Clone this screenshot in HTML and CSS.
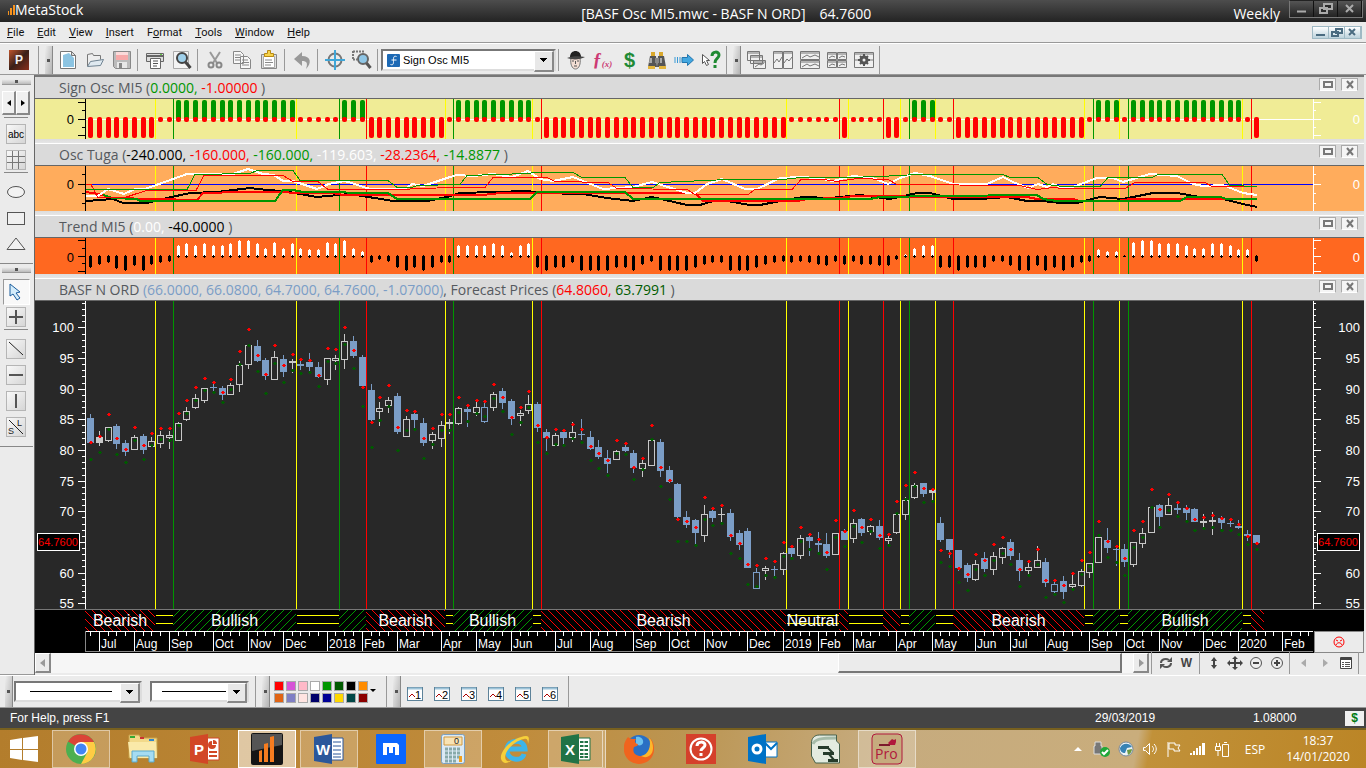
FILE: index.html
```html
<!DOCTYPE html>
<html lang="en">
<head>
  <meta charset="utf-8">
  <title>MetaStock</title>
  <link rel="stylesheet" href="styles.css">
</head>
<body>
  <header class="titlebar">
    <div class="brand">
      <svg width="7" height="10" viewBox="0 0 7 10"><path d="M0 6h1v4H0zM2 3h2v7H2zM5 0h2v10H5z" fill="#f7931e"/></svg>
      <span>MetaStock</span>
    </div>
    <div class="doc-title"><span>[BASF Osc MI5.mwc - BASF N ORD]</span><span>64.7600</span></div>
    <div class="period">Weekly</div>
    <div class="win-buttons">
      <button aria-label="Minimize"><svg width="14" height="14"><path d="M2 9.500h9" stroke="#aaa" stroke-width="2"/></svg></button>
      <button aria-label="Restore"><svg width="16" height="14"><path d="M6 2h8v5H6zM2 6h7v5H2z" fill="#2a2a2a" stroke="#aaa" stroke-width="2"/></svg></button>
      <button aria-label="Close"><svg width="12" height="14"><path d="M2 3l7 7M9 3l-7 7" stroke="#aaa" stroke-width="2"/></svg></button>
    </div>
  </header>

  <nav class="menubar">
    <a href="#"><u>F</u>ile</a>
    <a href="#"><u>E</u>dit</a>
    <a href="#"><u>V</u>iew</a>
    <a href="#"><u>I</u>nsert</a>
    <a href="#">F<u>o</u>rmat</a>
    <a href="#"><u>T</u>ools</a>
    <a href="#"><u>W</u>indow</a>
    <a href="#"><u>H</u>elp</a>
    <div class="mdi-buttons">
      <button aria-label="Minimize chart"><svg width="12" height="11"><path d="M1 8h9" stroke="#4a6b80" stroke-width="2"/></svg></button>
      <button aria-label="Restore chart"><svg width="14" height="11"><path d="M6 2h6v4H6zM2 5h6v4H2z" fill="#dbe8ee" stroke="#4a6b80" stroke-width="2"/></svg></button>
      <button aria-label="Close chart"><svg width="11" height="11"><path d="M2 2l6 6M8 2l-6 6" stroke="#4a6b80" stroke-width="2"/></svg></button>
    </div>
  </nav>

  <div class="toolbar">
    <button class="p-icon" aria-label="Power Console">P</button>
    <i class="vsep wide"></i>
    <i class="grip"></i>
    <button class="tool" aria-label="New"><svg width="20" height="20"><path d="M2.500 1.500h11l4 4v13h-15z" fill="#fff" stroke="#777"/><path d="M5 5l6-2 5 5v9H5z" fill="#8cc4e2"/><path d="M13.500 1.500v4h4z" fill="#ddd" stroke="#777"/></svg></button>
    <button class="tool" aria-label="Open"><svg width="20" height="20"><path d="M2.500 16V4.500l5-1 1 2h7v4" fill="#eee" stroke="#777"/><path d="M2.500 16.500l3-5 13-2-3 6z" fill="#dfe9f0" stroke="#6f8392"/></svg></button>
    <button class="tool" aria-label="Save"><svg width="20" height="20"><path d="M1.500 1.500h17v17h-15l-2-2z" fill="#bbb" stroke="#888"/><path d="M4 2h12v8H4z" fill="#f7a9a9"/><path d="M4 2h12v3H4z" fill="#fbdada"/><path d="M5 12h10v6H5z" fill="#e8e8e8"/><path d="M7 13h3v5H7z" fill="#888"/></svg></button>
    <i class="vsep"></i>
    <button class="tool" aria-label="Print"><svg width="20" height="20"><path d="M1.500 3.500h17v8h-17z" fill="#ddd" stroke="#666"/><path d="M2 6h16" stroke="#666" stroke-width="2"/><path d="M5.500 8.500h10v10h-10z" fill="#fff" stroke="#666"/><path d="M8 11h5M8 13.500h5M8 16h4" stroke="#555"/><path d="M15 4h2v1h-2z" fill="#6c4"/></svg></button>
    <button class="tool" aria-label="Print preview"><svg width="20" height="20"><path d="M1.500 1.500h15v17h-15z" fill="#f4f4f4" stroke="#aaa"/><circle cx="10" cy="8" r="5" fill="#9fd0ea" stroke="#444" stroke-width="2"/><path d="M13.500 12l5 6" stroke="#444" stroke-width="3"/></svg></button>
    <i class="vsep"></i>
    <button class="tool" aria-label="Cut"><svg width="20" height="20"><path d="M5 2l7 11M15 2L8 13" stroke="#999" stroke-width="2"/><circle cx="6" cy="15" r="2.500" fill="none" stroke="#888" stroke-width="2"/><circle cx="14" cy="15" r="2.500" fill="none" stroke="#888" stroke-width="2"/></svg></button>
    <button class="tool" aria-label="Copy"><svg width="20" height="20"><path d="M1.500 1.500h7l3 3v9h-10zM8.500 6.500h7l3 3v9h-10z" fill="#f8f8f8" stroke="#888"/><path d="M3 5h6M3 7.500h5M3 10h5M10 10h6M10 12.500h7M10 15h7" stroke="#888"/></svg></button>
    <button class="tool" aria-label="Paste"><svg width="20" height="20"><path d="M2.500 4.500h15v14h-15z" fill="#ddd" stroke="#888"/><path d="M4.500 6.500h11v11h-11z" fill="#fff" stroke="#aaa"/><path d="M5.500 6.500v-3h3v-3h3v3h3v3z" fill="#f6d24a" stroke="#b98a12"/><path d="M6 10h7M6 12.500h8M6 15h6" stroke="#888"/></svg></button>
    <i class="vsep"></i>
    <button class="tool" aria-label="Undo"><svg width="20" height="20"><path d="M2 9l8-7v4c9 0 10 7 4 13 2-6 1-8-4-8v5z" fill="#999"/></svg></button>
    <i class="vsep"></i>
    <button class="tool" aria-label="Crosshair"><svg width="20" height="20"><circle cx="10" cy="10" r="6.500" fill="none" stroke="#777" stroke-width="2"/><path d="M10 0v20M0 10h20" stroke="#3fa6d8" stroke-width="2"/></svg></button>
    <button class="tool" aria-label="Zoom box"><svg width="20" height="20"><path d="M1 1.500h11M1 1v9M1 9.500h4" stroke="#777" stroke-width="2" stroke-dasharray="2 1" fill="none"/><circle cx="11" cy="9" r="5" fill="#8fc6e6" stroke="#666" stroke-width="2"/><path d="M14.500 13l4 5" stroke="#555" stroke-width="3"/></svg></button>
    <i class="vsep"></i>
    <label class="combo indicator">
      <svg width="13" height="13"><rect width="13" height="13" rx="1" fill="#1c69b5"/><path d="M9.500 2.500c-3-1-3 1-3 4s0 5-3 4M4.500 6h5" stroke="#fff" fill="none"/></svg>
      <select aria-label="Indicator"><option>Sign Osc MI5</option></select>
    </label>
    <i class="vsep"></i>
    <button class="tool" aria-label="Expert Advisor"><svg width="20" height="20"><path d="M5 8h9c1 6-1 11-4.500 11S4 14 5 8z" fill="#f3ddd3" stroke="#777"/><path d="M4 7c0-8 11-8 11 0z" fill="#222"/><path d="M1 8c5-2 12-2 18-1-5 3-13 3-18 1z" fill="#444"/><path d="M6 11h2M11 11h2M8 16h3M9.500 11v3" stroke="#555"/></svg></button>
    <button class="tool fx" aria-label="Indicator Builder">ƒ<small>(x)</small></button>
    <button class="tool dollar" aria-label="System Tester">$</button>
    <button class="tool" aria-label="Explorer"><svg width="20" height="20"><path d="M4 2h4v4H4zM12 2h4v4h-4z" fill="#d9a82c"/><path d="M3 6h6l1 11H1zM11 6h6l2 11h-9z" fill="#555"/><path d="M8 8h4v5H8z" fill="#888"/><path d="M3 8h2v5H2zM13 8h2v5h-2z" fill="#aaa"/><path d="M1 16h7v3H1zM12 16h7v3h-7z" fill="#e3b53c"/></svg></button>
    <button class="tool" aria-label="Forecaster"><svg width="20" height="20"><path d="M1 7v6M3.500 7v6M6 7v6" stroke="#3a9ad6"/><path d="M8 7.500h5.500v-3l6 5.500-6 5.500v-3H8z" fill="#42a7e0" stroke="#2376ae"/></svg></button>
    <button class="tool" aria-label="Context help"><svg width="20" height="20"><path d="M1.500 4.500v9l2-2 2 4 2-1-2-4h3z" fill="#fff" stroke="#555"/><path d="M11 6c0-5 7-5 7-1 0 4-4 3-4 8M14 15v3" stroke="#1f8a32" stroke-width="3" fill="none"/></svg></button>
    <i class="vsep wide"></i>
    <i class="grip"></i>
    <button class="tool" aria-label="Cascade"><svg width="20" height="20" class="ln"><path d="M1.500 1.500h12v9h-12zM4.500 5.500h12v8h-12zM7.500 10.500h12v8h-12z"/><path d="M1 3h13M4 7h13M7 12h13M9 17l4-3 2 1 3-2"/></svg></button>
    <button class="tool" aria-label="Columns"><svg width="20" height="20" class="ln"><path d="M.5 1.500h9v17h-9zM10.500 1.500h9v17h-9z"/><path d="M1 3h8M11 3h8M1 13l3-4 2 3 3-5M11 13l3-4 2 2 3-4"/></svg></button>
    <button class="tool" aria-label="Stacked"><svg width="20" height="20" class="ln"><path d="M.5 1.500h19v8H.5zM.5 10.500h19v8H.5z"/><path d="M1 3h18M1 12h18M2 8l5-3 3 2 5-2 4 2M2 17l5-3 3 2 5-2 4 2"/></svg></button>
    <button class="tool" aria-label="Tile"><svg width="20" height="20" class="ln"><path d="M.5 2.500h9v7h-9zM10.500 2.500h9v7h-9zM.5 10.500h9v7h-9zM10.500 10.500h9v7h-9z"/><path d="M1 4h18M1 12h18M2 8l3-2 3 1M12 8l3-2 3 1M2 16l3-2 3 1M12 16l3-2 3 1"/></svg></button>
    <button class="tool" aria-label="Layout options"><svg width="20" height="20" class="ln"><path d="M.5 2.500h19v15H.5z"/><path d="M1 4h18M1 10h18"/><circle cx="10" cy="10" r="3" stroke="#555" stroke-width="3" fill="#eee"/><path d="M10 4v3M10 13v3M4 10h3M13 10h3M6 6l2 2M12 12l2 2M14 6l-2 2M8 12l-2 2" stroke="#555" stroke-width="2"/></svg></button>
    <i class="vsep wide"></i>
  </div>

  <main class="main">
    <aside class="toolbox">
      <i class="hgrip"></i>
      <div class="arrows">
        <button aria-label="Previous"><svg width="4" height="6"><path d="M4 0v6L0 3z"/></svg></button><button aria-label="Next"><svg width="4" height="6"><path d="M0 0v6l4-3z"/></svg></button>
      </div>
      <hr>
      <button class="draw abc" aria-label="Text">abc</button>
      <button class="draw" aria-label="Grid"><svg width="20" height="20"><path d="M6.500 1v18M12.500 1v18M1 6.500h18M1 12.500h18" stroke="#777" stroke-width="1"/></svg></button>
      <hr>
      <button class="draw flat" aria-label="Ellipse"><svg width="20" height="20"><ellipse cx="10" cy="10" rx="8.500" ry="5.500" fill="#f2f2f2" stroke="#555"/></svg></button>
      <button class="draw flat" aria-label="Rectangle"><svg width="20" height="20"><rect x="1.500" y="4.500" width="17" height="12" fill="#f0f0f0" stroke="#555"/></svg></button>
      <button class="draw flat" aria-label="Triangle"><svg width="20" height="20"><path d="M10 4l9 11.500H1z" fill="#f2f2f2" stroke="#555"/></svg></button>
      <hr class="full">
      <i class="hgrip"></i>
      <button class="draw pointer" aria-label="Pointer"><svg width="18" height="20"><path d="M3 2v12l3-2 4 6 3-2-4-5 4-1z" fill="#d3ecfb" stroke="#1a5c9c" stroke-width="1"/></svg></button>
      <button class="draw" aria-label="Crosshairs"><svg width="20" height="20"><path d="M10 3v14M3 10h14" stroke="#555" stroke-width="2"/></svg></button>
      <hr>
      <button class="draw" aria-label="Trendline"><svg width="20" height="20"><path d="M3 3l14 13" stroke="#222" stroke-width="1"/></svg></button>
      <button class="draw" aria-label="Horizontal line"><svg width="20" height="20"><path d="M3 10h14" stroke="#555" stroke-width="2"/></svg></button>
      <button class="draw" aria-label="Vertical line"><svg width="20" height="20"><path d="M10 3v14" stroke="#555" stroke-width="2"/></svg></button>
      <button class="draw" aria-label="Speed lines"><svg width="20" height="20"><path d="M3 3l14 14" stroke="#222"/><text x="2" y="17" class="tiny">S</text><text x="11" y="9" class="tiny">L</text></svg></button>
      <hr class="full">
    </aside>

    <section class="chart" id="chart">
      <div class="pane-head">
        <h2>Sign Osc MI5 (<b class="g">0.0000, </b><b class="r">-1.00000 </b>)</h2>
        <button aria-label="Maximize"><svg width="14" height="11"><rect x="3" y="3" width="8" height="5" fill="none" stroke="#777" stroke-width="2"/></svg></button>
        <button aria-label="Close"><svg width="14" height="11"><path d="M4 2l6 7M10 2l-6 7" stroke="#777" stroke-width="2"/></svg></button>
      </div>
      <svg class="plot sign" id="sign"></svg>
      <div class="pane-head spaced">
        <h2>Osc Tuga (<b class="k">-240.000, </b><b class="r">-160.000, </b><b class="g">-160.000, </b><b class="w">-119.603, </b><b class="r">-28.2364, </b><b class="g">-14.8877 </b>)</h2>
        <button aria-label="Maximize"><svg width="14" height="11"><rect x="3" y="3" width="8" height="5" fill="none" stroke="#777" stroke-width="2"/></svg></button>
        <button aria-label="Close"><svg width="14" height="11"><path d="M4 2l6 7M10 2l-6 7" stroke="#777" stroke-width="2"/></svg></button>
      </div>
      <svg class="plot tuga" id="tuga"></svg>
      <div class="pane-head spaced">
        <h2>Trend MI5 (<b class="w">0.00, </b><b class="k">-40.0000 </b>)</h2>
        <button aria-label="Maximize"><svg width="14" height="11"><rect x="3" y="3" width="8" height="5" fill="none" stroke="#777" stroke-width="2"/></svg></button>
        <button aria-label="Close"><svg width="14" height="11"><path d="M4 2l6 7M10 2l-6 7" stroke="#777" stroke-width="2"/></svg></button>
      </div>
      <svg class="plot trend" id="trend"></svg>
      <div class="pane-head spaced">
        <h2>BASF N ORD <b class="bl">(66.0000, 66.0800, 64.7000, 64.7600, -1.07000)</b>, Forecast Prices (<b class="r">64.8060, </b><b class="dg">63.7991 </b>)</h2>
        <button aria-label="Maximize"><svg width="14" height="11"><rect x="3" y="3" width="8" height="5" fill="none" stroke="#777" stroke-width="2"/></svg></button>
        <button aria-label="Close"><svg width="14" height="11"><path d="M4 2l6 7M10 2l-6 7" stroke="#777" stroke-width="2"/></svg></button>
      </div>
      <svg class="plot price" id="price"></svg>
      <svg class="plot ribbon" id="ribbon"></svg>
      <div class="date-row">
        <svg class="dates" id="dates"></svg>
        <div class="face"><svg width="12" height="12"><circle cx="6" cy="6" r="5" fill="none" stroke="#f00"/><path d="M3 4l2 1M9 4L7 5M3 9c1-3 5-3 6 0" fill="none" stroke="#f00"/></svg></div>
      </div>
      <div class="scroll-row">
        <button class="sb" aria-label="Scroll left"><svg width="6" height="8"><path d="M5 0v8L0 4z" fill="#999"/></svg></button>
        <div class="track"><div class="thumb"></div></div>
        <button class="sb" aria-label="Scroll right"><svg width="6" height="8"><path d="M1 0v8l5-4z" fill="#999"/></svg></button>
        <i class="vsep"></i>
        <button class="nav" aria-label="Refresh"><svg width="14" height="14"><path d="M2 7c0-4 5-5 8-3M12 7c0 4-5 5-8 3" fill="none" stroke="#555" stroke-width="2"/><path d="M8 6h5V1zM6 8H1v5z" fill="#555"/></svg></button>
        <button class="nav" aria-label="Weekly">W</button>
        <i class="vsep"></i>
        <button class="nav" aria-label="Vertical scale"><svg width="14" height="14"><path d="M7 1l3 4H4zM7 13l3-4H4z" fill="#444"/><path d="M7 4v6" stroke="#444" stroke-width="2"/></svg></button>
        <button class="nav" aria-label="Pan"><svg width="16" height="14"><path d="M8 0l3 3H5zM8 14l3-3H5zM0 7l3-3v6zM16 7l-3-3v6z" fill="#444"/><path d="M8 2v10M2 7h12" stroke="#444" stroke-width="2"/></svg></button>
        <button class="nav" aria-label="Zoom out"><svg width="14" height="14"><circle cx="7" cy="7" r="5.500" fill="#eee" stroke="#555"/><path d="M4 7h6" stroke="#444" stroke-width="2"/></svg></button>
        <button class="nav" aria-label="Zoom in"><svg width="14" height="14"><circle cx="7" cy="7" r="5.500" fill="#eee" stroke="#555"/><path d="M4 7h6M7 4v6" stroke="#444" stroke-width="2"/></svg></button>
        <i class="vsep"></i>
        <button class="nav" aria-label="Previous security"><svg width="14" height="14"><path d="M9 3v8L4 7z" fill="#aaa"/></svg></button>
        <button class="nav" aria-label="Next security"><svg width="14" height="14"><path d="M5 3v8l5-4z" fill="#aaa"/></svg></button>
        <button class="nav" aria-label="List"><svg width="14" height="14"><path d="M1.500 1.500h11v11h-11z" fill="#fff" stroke="#444"/><path d="M1 3h12" stroke="#444" stroke-width="2"/><path d="M3 6.500h2M6 6.500h5M3 8.500h2M6 8.500h5M3 10.500h2M6 10.500h5" stroke="#555"/></svg></button>
        <i class="vsep"></i>
      </div>
    </section>
  </main>

  <div class="toolbar bottom">
    <i class="grip"></i>
    <label class="combo line long"><select aria-label="Line style"><option></option></select></label>
    <label class="combo line"><select aria-label="Line weight"><option></option></select></label>
    <i class="vsep wide"></i>
    <i class="grip"></i>
    <div class="swatches" id="swatches"></div>
    <span class="caret"></span>
    <i class="vsep wide"></i>
    <i class="grip"></i>
    <div class="templates" id="templates"></div>
    <i class="vsep wide"></i>
  </div>

  <footer class="status">
    <span class="help">For Help, press F1</span>
    <span class="date">29/03/2019</span>
    <span class="value">1.08000</span>
    <span class="cash">$</span>
  </footer>

  <div class="taskbar">
    <button class="start" aria-label="Start"><svg width="28" height="26"><path d="M0 4l12-2v11H0zM13 2l15-2v13H13zM0 14h12v10L0 22zM13 14h15v12l-15-2z" fill="#fff"/></svg></button>
    <button class="app open" aria-label="Chrome"><svg width="30" height="30"><circle cx="15" cy="15" r="15" fill="#4caf50"/><path d="M15 15L2 7.500A15 15 0 0 1 28 8H15z" fill="#db4437"/><path d="M28 8a15 15 0 0 1-13 22l6.500-12L15 8z" fill="#fc4"/><circle cx="15" cy="15" r="7" fill="#fff"/><circle cx="15" cy="15" r="5.500" fill="#4285f4"/></svg></button>
    <button class="app" aria-label="File Explorer"><svg width="32" height="30"><path d="M2 1h10l2 3h16v20H2z" fill="#f2d98a" stroke="#c6a24a"/><path d="M3 2h5v2H3z" fill="#3a3"/><path d="M13 3h4v2h-4z" fill="#c33"/><path d="M22 5h5v2h-5z" fill="#38c"/><path d="M1 8h28l1 16H3z" fill="#fae9a9"/><path d="M5 28V17h22v11h-5v-6H10v6z" fill="#a5dcf2" stroke="#5aa9cc"/></svg></button>
    <button class="app" aria-label="PowerPoint"><svg width="30" height="30"><path d="M15 4h14v22H15z" fill="#fff" stroke="#d24726"/><path d="M22 7a4 4 0 1 0 4 4h-4zM23 6v4h4a4 4 0 0 0-4-4z" fill="#d24726"/><path d="M19 18h8M19 22h8" stroke="#d24726" stroke-width="2"/><path d="M0 3l18-3v30L0 27z" fill="#d24726"/><text x="4" y="21" class="logo">P</text></svg></button>
    <button class="app open active" aria-label="MetaStock"><svg width="32" height="32"><rect width="32" height="32" rx="2" fill="#151515"/><path d="M1 1h30v11L1 18z" fill="#555"/><path d="M8 18l3-1v12H8zM13 11l4-1v19h-4zM19 4l4-1v26h-4z" fill="#f57c20"/></svg></button>
    <button class="app open" aria-label="Word"><svg width="30" height="30"><path d="M15 4h14v22H15z" fill="#fff" stroke="#2b579a"/><path d="M19 8h8M19 12h8M19 16h8M19 20h8M19 23h8" stroke="#2b579a" stroke-width="1"/><path d="M0 3l18-3v30L0 27z" fill="#2b579a"/><text x="2" y="21" class="logo">W</text></svg></button>
    <button class="app" aria-label="Maxthon"><svg width="30" height="30"><rect width="30" height="30" rx="1" fill="#0a66ff"/><path d="M7 21V9h14l2 2v10h-4v-8h-2v6h-4v-6h-2v8z" fill="#fff"/></svg></button>
    <button class="app open" aria-label="Calculator"><svg width="24" height="30"><rect x=".5" y=".5" width="23" height="29" rx="2" fill="#dceaf5" stroke="#7aa0c0"/><path d="M3 3h18v8H3z" fill="#f8e3b4" stroke="#d29a40"/><text x="13" y="10" class="tiny">0</text><path d="M4 15h16M4 19h16M4 23h16M4 27h12" stroke="#8aa" stroke-width="3" stroke-dasharray="3 1"/><path d="M18 22h3v6h-3z" fill="#f0a020"/></svg></button>
    <button class="app" aria-label="Internet Explorer"><svg width="32" height="30"><path d="M25 20c-2 8-17 7-17-4S25 4 26 15H10" fill="none" stroke="#3db5ea" stroke-width="5"/><path d="M4 28C-4 22 12 3 27 2c4 0 3 4 2 8 0-4-1-6-4-5C14 7 3 20 7 26c2 2 4 1 6 0-3 3-7 4-9 2z" fill="#f6cf3a"/></svg></button>
    <button class="app open stack" aria-label="Excel"><svg width="30" height="30"><path d="M15 4h14v22H15z" fill="#fff" stroke="#217346"/><path d="M19 8h8M19 12h8M19 16h8M19 20h8M19 23h8" stroke="#217346" stroke-width="2"/><path d="M23 6v18" stroke="#fff"/><path d="M0 3l18-3v30L0 27z" fill="#217346"/><text x="4" y="21" class="logo">X</text></svg></button>
    <button class="app" aria-label="Firefox"><svg width="30" height="30"><circle cx="15" cy="14" r="13" fill="#2a6fc4"/><path d="M12 3c4-1 8 2 7 6-1 3-5 3-7 1z" fill="#6bc0ee"/><path d="M4 3c-8 9-5 26 11 27 17-1 18-19 11-26 3 8-1 18-9 18-6 0-9-4-7-9 2-1 4-1 4-3-3 0-4-3-2-5-4 0-6 0-8-2z" fill="#f0641e"/><path d="M25 4c3 8-1 17-8 18 5 3 12 0 12-8 0-4-1-8-4-10z" fill="#fdb72b"/></svg></button>
    <button class="app" aria-label="Help"><svg width="30" height="30"><rect width="30" height="30" fill="#d5402b"/><circle cx="15" cy="15" r="10.500" fill="none" stroke="#fff" stroke-width="2"/><path d="M11 12c0-5 8-5 8-1 0 3-4 3-4 6M15 19v3" fill="none" stroke="#fff" stroke-width="3"/></svg></button>
    <button class="app" aria-label="Outlook"><svg width="30" height="30"><path d="M16 8h13v15H16z" fill="#fff" stroke="#0072c6"/><path d="M17 9l6 6 6-6" fill="none" stroke="#0072c6" stroke-width="2"/><path d="M0 3l18-3v30L0 27z" fill="#0072c6"/><circle cx="9" cy="15" r="4" fill="none" stroke="#fff" stroke-width="3"/></svg></button>
    <button class="app" aria-label="Equis"><svg width="30" height="30"><path d="M1.500 9c0-5 3-8 8-8h17v6l3 3v19h-24l-4-7z" fill="#e3ebe0" stroke="#45604b"/><path d="M3 10c2-5 8-6 23-6" fill="none" stroke="#a5bba8" stroke-width="3"/><path d="M8 12h11v3H8zM13 18h11v3H13zM18 25h10v3H18z" fill="#263c2c"/><path d="M18 14l5 5M19 20l5 6" fill="none" stroke="#263c2c" stroke-width="2"/></svg></button>
    <button class="app open" aria-label="Pro"><svg width="32" height="32"><rect x="1" y="1" width="30" height="30" rx="4" fill="#c6ab7e" stroke="#b0183c"/><path d="M8 12h11" fill="none" stroke="#7c1a2c" stroke-width="2"/><path d="M17 10l4-4 2 1 2-1v3l-1 3h-5z" fill="#b0183c"/><text x="4" y="26" class="pro">Pro</text></svg></button>
    <div class="tray">
      <i><svg width="10" height="6"><path d="M1 5l4-4 4 4z" fill="#fff"/></svg></i>
      <i><svg width="18" height="18"><path d="M2 2h6v4h1v8H1V6h1z" fill="#777" stroke="#ddd"/><circle cx="12" cy="12" r="5" fill="#1fa838"/><path d="M9 12l2 2 4-4" stroke="#fff" stroke-width="2" fill="none"/></svg></i>
      <i><svg width="16" height="16"><circle cx="8" cy="8" r="7" fill="#eef4f6" stroke="#789"/><path d="M2 7c2-5 9-6 12-1l-5 1-2 5C4 12 2 10 2 7z" fill="#3783b5"/><path d="M9 9l5-1c0 3-2 5-4 6z" fill="#6a9a42"/></svg></i>
      <i><svg width="16" height="16"><path d="M1.500 6.500h2l4-4v11l-4-4h-2z" fill="none" stroke="#fff"/><path d="M10 5c2 2 2 4 0 6M12 3c3 3 3 7 0 10" fill="none" stroke="#fff"/></svg></i>
      <i><svg width="16" height="16"><path d="M2 1v15M3 2h6v2h5l-2 3 2 3H8V8H3z" fill="none" stroke="#fff" stroke-width="1"/></svg></i>
      <i><svg width="16" height="14"><path d="M0 11h2v2H0zM3 9h2v4H3zM6 6h2v7H6zM9 4h2v9H9zM12 1h3v12h-3z" fill="#fff"/></svg></i>
      <i><svg width="16" height="16"><path d="M8.500 3.500h6v12h-6zM10 1.500h3M1.500 5.500h5v4h-5zM2.500 2v3M5.500 2v3M4 10v5" fill="none" stroke="#fff"/></svg></i>
      <span class="lang">ESP</span>
      <div class="clock"><span>18:37</span><span>14/01/2020</span></div>
    </div>
  </div>

  <script src="script.js"></script>
</body>
</html>
```
FILE: styles.css
```css
* {
  box-sizing: border-box;
}

body {
  margin: 0;
  height: 100vh;
  display: flex;
  flex-direction: column;
  overflow: hidden;
  background: #ebebeb;
  font-family: "Liberation Sans", Arial, sans-serif;
  font-size: 12px;
}

button {
  display: flex;
  align-items: center;
  justify-content: center;
  margin: 0;
  padding: 0;
  border: 0;
  background: none;
  font: inherit;
}

svg {
  display: block;
  flex: none;
}

/* title bar */
.titlebar {
  height: 22px;
  display: flex;
  align-items: flex-start;
  padding: 0 3px 0 8px;
  background: linear-gradient(#4d4d4d, #232323);
  color: #fff;
  font-family: "Open Sans", "Noto Sans", sans-serif;
  font-size: 14px;
  line-height: 22px;
}

.brand {
  display: flex;
  align-items: center;
  width: 85px;
  height: 20px;
}

.doc-title {
  flex: 1;
  display: flex;
  justify-content: center;
  gap: 14px;
  padding: 3px 0 0 126px;
}

.period {
  padding: 3px 9px 0 0;
}

.win-buttons {
  display: flex;
  height: 18px;
  border: 1px solid #777;
  border-top-color: #222;
}

.win-buttons button {
  width: 24px;
  background: linear-gradient(#555, #222);
  border-right: 1px solid #111;
}

/* menu */
.menubar {
  height: 21px;
  display: flex;
  align-items: center;
  gap: 13px;
  padding: 0 4px 0 7px;
  border-bottom: 1px solid #999;
  font-family: Roboto, sans-serif;
  font-size: 11px;
}

.menubar a {
  color: #111;
  text-decoration: none;
}

.mdi-buttons {
  display: flex;
  margin-left: auto;
  height: 13px;
  border: 1px solid #9fb9c4;
}

.mdi-buttons button {
  width: 16px;
  background: linear-gradient(#fff, #bcd2dc);
  border-right: 1px solid #9fb9c4;
}

/* toolbars */
.toolbar {
  height: 32px;
  display: flex;
  align-items: center;
  border-top: 1px solid #fff;
  border-bottom: 1px solid #999;
  padding: 2px 0 0 9px;
}

.tool {
  width: 27px;
  height: 22px;
}

.p-icon {
  width: 20px;
  height: 20px;
  margin-right: 7px;
  background: linear-gradient(135deg, #c0552c, #3a2018 50%, #8a2f1a);
  color: #eee;
  font-weight: bold;
}

.vsep {
  width: 6px;
  height: 22px;
  background: linear-gradient(#999, #999) 2px 0 / 1px 100% no-repeat;
}

.vsep.wide {
  width: 8px;
  height: 100%;
}

.grip {
  width: 8px;
  height: 100%;
  margin: 0 1px;
  border-right: 1px solid #888;
  background: linear-gradient(#555, #555) 50% 50% / 3px 3px no-repeat, linear-gradient(100deg, #eee, #b4b4b4);
}

.combo {
  position: relative;
  display: flex;
  align-items: center;
  height: 22px;
  padding-left: 4px;
  background: #fff;
  border: 2px solid #777;
  border-right-color: #ddd;
  border-bottom-color: #ddd;
}

.combo select {
  flex: 1;
  height: 100%;
  appearance: none;
  border: 0;
  padding: 0 0 0 3px;
  background: none;
  color: #000;
  font-family: "Liberation Sans", Arial, sans-serif;
  font-size: 11px;
}

.combo::after {
  content: "";
  position: absolute;
  right: 0;
  top: 0;
  width: 17px;
  height: 100%;
  border: 1px solid #fff;
  border-right: 2px solid #888;
  border-bottom: 2px solid #888;
  background: linear-gradient(#000, #000) 50% 6px / 7px 1px no-repeat, linear-gradient(#000, #000) 50% 7px / 5px 1px no-repeat, linear-gradient(#000, #000) 50% 8px / 3px 1px no-repeat, linear-gradient(#000, #000) 50% 9px / 1px 1px no-repeat, #e8e8e8;
  pointer-events: none;
}

.indicator {
  width: 175px;
}

.fx {
  color: #cc3a74;
  font: italic bold 18px "Liberation Serif", serif;
}

.fx small {
  padding-top: 8px;
  font-size: 9px;
}

.dollar {
  color: #218a35;
  font-size: 20px;
  font-weight: bold;
}

.ln {
  fill: #f0f0f0;
  stroke: #777;
}

.ln path + path {
  fill: none;
}

.tiny {
  font-size: 9px;
  fill: #222;
}

/* left toolbox */
.main {
  flex: 1;
  min-height: 0;
  display: flex;
}

.toolbox {
  width: 34px;
  display: flex;
  flex-direction: column;
  align-items: center;
  gap: 6px;
  padding: 4px 2px 0 0;
  border-bottom: 1px solid #999;
}

.hgrip {
  width: 29px;
  height: 6px;
  flex: none;
  background: linear-gradient(#555, #555) 50% 50% / 3px 3px no-repeat, linear-gradient(#eee, #bbb);
  border-bottom: 1px solid #999;
}

.arrows {
  display: flex;
}

.arrows button {
  width: 14px;
  height: 24px;
  background: #f0f0f0;
  border: 1px solid #fff;
  border-right: 2px solid #888;
  border-bottom: 2px solid #888;
}

.toolbox hr {
  width: 24px;
  margin: -4px 0 0;
  border: 0;
  border-top: 1px solid #888;
}

.toolbox .draw ~ hr {
  margin-bottom: 3px;
}

.toolbox .draw ~ hr.full {
  width: 34px;
  margin: 3px 0 -3px;
}

.draw {
  width: 20px;
  height: 20px;
  flex: none;
  background: linear-gradient(135deg, #fafafa, #d4d4d4);
  box-shadow: inset 0 0 0 1px #b5b5b5;
}

.draw.flat {
  background: none;
  box-shadow: none;
}

.draw.abc {
  font-size: 10px;
}

.draw.pointer {
  width: 27px;
  height: 26px;
  margin-bottom: -4px;
  background: #f8f8f8;
  border: 1px solid #999;
  border-right-color: #fff;
  border-bottom-color: #fff;
  box-shadow: none;
}

/* chart */
.chart {
  flex: 1;
  min-width: 0;
  display: flex;
  flex-direction: column;
  margin-right: 2px;
  padding-bottom: 2px;
  border-top: 2px solid #777;
  border-left: 1px solid #666;
}

.pane-head {
  height: 22px;
  flex: none;
  display: flex;
  gap: 5px;
  padding: 1px 6px 0 24px;
  background: #dadada;
  border-bottom: 1px solid #666;
}

.pane-head.spaced {
  height: 27px;
  padding-top: 6px;
  background: linear-gradient(#ddd, #e6e6e6 4px, #fff 4px, #fff 5px, #dadada 5px);
}

.pane-head h2 {
  flex: 1;
  margin: 0;
  color: #55595e;
  font: 14px/19px "Open Sans", "Noto Sans", sans-serif;
  white-space: pre;
}

.pane-head b {
  font-weight: normal;
}

.pane-head .g { color: #009600; }
.pane-head .dg { color: #005a00; }
.pane-head .r { color: #f00; }
.pane-head .w { color: #fff; }
.pane-head .k { color: #000; }
.pane-head .bl { color: #7b9dc6; }

.pane-head button {
  width: 17px;
  height: 13px;
  background: #f5f5f5;
  border: 1px solid #aaa;
  border-bottom-color: #fff;
}

.plot {
  width: 100%;
  shape-rendering: crispEdges;
}

.round {
  shape-rendering: geometricPrecision;
}

.sign { height: 40px; background: #f0ec96; }
.tuga { height: 45px; background: #ffac5c; }
.trend { height: 36px; background: #ff6820; }
.price { flex: 1; min-height: 0; background: #282828; overflow: visible; }

.ribbon {
  height: 22px;
  background: #000;
  border-top: 1px solid #777;
}

.date-row {
  height: 22px;
  flex: none;
  display: flex;
  background: #000;
}

.dates {
  flex: 1;
  height: 22px;
  shape-rendering: crispEdges;
}

.face {
  width: 50px;
  display: flex;
  align-items: center;
  justify-content: center;
  background: #ebebeb;
  border: 1px solid #888;
}

.plot text,
.dates text {
  font-family: "Liberation Sans", Arial, sans-serif;
  font-size: 12px;
}

.plot .scale {
  font-size: 13px;
  text-anchor: end;
}

.plot .zone {
  font-size: 16px;
  fill: #fff;
  text-anchor: middle;
}

.plot .last {
  font-size: 11px;
  fill: #f00;
  text-anchor: middle;
}

/* scroll row */
.scroll-row {
  height: 20px;
  flex: none;
  display: flex;
  align-items: center;
  padding-right: 2px;
}

.sb {
  width: 16px;
  height: 20px;
  background: #ebebeb;
  border: 1px solid #fff;
  border-right: 2px solid #888;
  border-bottom: 2px solid #888;
}

.track {
  flex: 1;
  height: 20px;
  padding-right: 11px;
  display: flex;
  justify-content: flex-end;
  background: #f6f6f6;
}

.thumb {
  width: 26.5%;
  background: #ebebeb;
  border: 1px solid #fff;
  border-right: 2px solid #777;
  border-bottom: 2px solid #777;
}

.nav {
  width: 21px;
  height: 20px;
  color: #444;
  font-weight: bold;
}

/* bottom toolbar */
.toolbar.bottom {
  height: 33px;
  padding: 0 0 0 4px;
}

.line {
  width: 99px;
  height: 21px;
  margin-right: 4px;
}

.line.long {
  width: 128px;
  margin-right: 8px;
}

.line select {
  min-width: 0;
  background: linear-gradient(#000, #000) 15px 50% / 64px 1px no-repeat;
  background-position: 6px 50%;
}

.line.long select {
  background-position: 10px 50%;
  background-size: 82px 1px;
}

.swatches {
  display: grid;
  grid-template-columns: repeat(8, 10px);
  gap: 2px;
  padding: 1px 2px 0 3px;
}

.swatch {
  width: 10px;
  height: 10px;
  border: 1px solid #aaa;
}

.caret {
  border: 3px solid transparent;
  border-top-color: #000;
  margin-right: 8px;
}

.templates {
  display: flex;
  gap: 11px;
  padding: 4px 8px 0 5px;
}

.templates text {
  font-size: 11px;
}

/* status */
.status {
  height: 20px;
  flex: none;
  display: flex;
  align-items: center;
  padding: 0 2px 0 10px;
  background: #444;
  color: #fff;
}

.status .help { flex: 1; }
.status .date { width: 158px; }
.status .value { width: 92px; }

.status .cash {
  width: 19px;
  height: 15px;
  background: #f0f0f0;
  color: #007a10;
  font-weight: bold;
  line-height: 15px;
  text-align: center;
}

/* taskbar */
.taskbar {
  height: 40px;
  flex: none;
  display: flex;
  gap: 4px;
  border-top: 2px solid #77601f;
  background: linear-gradient(100deg, #b37d2c, #c08c3c 38%, #bb9552 50%, #c6ab7e 64%, #c9ad7c 83%, #c19139 84%, #bb8526);
}

.start {
  width: 48px;
}

.app {
  width: 58px;
  height: 38px;
}

.app.open {
  background: rgba(255, 255, 255, 0.22);
  border: 1px solid rgba(255, 255, 255, 0.45);
}

.app.active {
  background: rgba(255, 255, 255, 0.55);
  border-color: #fff;
}

.app.stack {
  border-right: 4px double rgba(255, 255, 255, 0.55);
}

.logo {
  fill: #fff;
  font-size: 15px;
  font-weight: bold;
}

.pro {
  fill: #b0183c;
  font-family: "Open Sans", sans-serif;
  font-size: 14px;
}

.tray {
  flex: 1;
  display: flex;
  align-items: center;
  justify-content: flex-end;
  color: #fff;
  font-family: "Open Sans", sans-serif;
  font-size: 12px;
}

.tray i {
  width: 24px;
  display: flex;
  justify-content: center;
}

.lang {
  width: 42px;
  text-align: center;
}

.clock {
  display: flex;
  flex-direction: column;
  align-items: center;
  width: 84px;
  margin-right: 6px;
  line-height: 16px;
}
```
FILE: script.js
```js
// zone kind and the bar it starts on: -1 bearish, 0 neutral, 1 bullish
const zones = [
  [0, -1], [8, 0], [10, 1], [24, 0], [29, 1], [32, -1], [41, 0], [42, 1], [51, 0], [52, -1],
  [80, 0], [86, -1], [87, 0], [91, -1], [93, 0], [94, 1], [97, 0], [99, -1], [114, 0],
  [115, 1], [118, 0], [119, 1], [132, 0], [133, -1]
];
const BARS = 134;
const zoneColor = { '-1': '#f00', '0': '#ff0', '1': '#009600' };

const trend = [
  -13, -10, -8, -14, -16, -11, -16, -10, -8, -7, 12, 14, 12, 14, 12, 12, 14, 17, 17, 14, 9, 15, 9, 14, 9, 8, 8, 15, 14, 17,
  9, 6, -8, -5, -7, -13, -16, -13, -16, -13, -8, -8, 12, 12, 12, 12, 14, 12, 5, 12, 14, -13, -16, -13, -13, -8, -16, -16,
  -16, -16, -13, -13, -16, -10, -7, -16, -16, -16, -16, -13, -10, -8, -8, -16, -16, -16, -13, -10, -8, -7, -8, -7, -8,
  -10, -11, -7, -10, -7, -10, -10, -11, -11, -5, 3, 9, 12, 12, -13, -13, -16, -13, -13, -13, -7, -7, -11, -16, -16, -11,
  -16, -13, -16, -13, -8, -7, 8, 6, 6, -2, 15, 17, 17, 14, 14, 14, 12, 9, 9, 14, 14, 12, 8, 8, -7
];

// high, body top, body bottom, low, kind (d down, u hollow, w solid grey, b hollow blue), red dot, green dot
const candles = `124,128,153,153,d,152,169 141,147,153,156,w,146,162 137,137,151,152,u,124,139 134,136,154,159,d,148,164
150,153,162,166,d,159,172 145,147,160,160,u,137,150 144,146,160,164,d,155,169 147,151,157,157,u,143,155
141,145,154,158,u,138,149 141,145,148,159,u,138,150 132,133,151,151,u,123,135 117,121,130,131,u,110,123
104,108,118,119,u,97,110 98,98,111,113,u,88,100 94,97,98,101,d,92,102 96,98,105,110,d,102,112
93,95,105,105,u,89,99 71,75,95,102,u,61,74 55,55,75,79,u,39,55 50,56,71,72,d,65,81
68,70,86,90,d,84,103 61,67,90,90,u,55,73 65,69,82,87,d,75,92 69,71,73,83,w,64,80
71,74,76,80,d,69,83 63,72,77,81,d,70,82 72,77,87,88,d,85,96 68,68,90,95,u,58,71
65,68,71,80,u,59,73 44,51,70,79,u,37,54 46,51,66,68,d,60,78 65,67,96,96,d,97,116
94,100,130,131,d,132,157 112,118,122,136,u,107,130 107,110,116,123,u,95,116 103,106,142,144,d,137,160
126,129,147,147,u,120,140 122,124,130,138,d,121,139 128,133,153,156,d,148,168 142,144,151,159,u,138,154
131,135,149,157,u,124,140 129,132,134,144,w,124,140 117,118,134,135,u,107,122 116,119,122,137,d,115,131
112,117,123,126,u,110,123 112,117,132,133,b,111,126 102,104,118,121,u,94,108 98,101,113,119,d,107,121
109,111,129,135,d,127,144 120,123,126,136,u,117,132 105,114,121,124,u,101,117 112,114,138,142,d,135,152
139,142,148,161,d,147,163 143,145,156,156,u,139,154 140,142,148,154,d,140,155 132,142,148,152,u,134,148
129,144,145,150,d,139,152 141,147,159,160,d,156,170 150,157,167,169,d,163,178 160,168,174,183,d,170,185
160,161,170,170,u,150,163 154,157,161,162,d,153,164 160,163,178,183,d,177,189 169,173,179,187,u,168,179
150,150,176,176,u,135,149 149,152,181,187,d,177,196 176,180,192,193,d,190,209 193,194,227,228,d,229,251
221,227,235,238,d,231,251 229,230,243,255,d,237,255 215,224,246,252,u,207,229 220,221,228,232,d,218,235
218,224,225,232,w,215,233 219,223,247,251,d,245,263 240,243,255,260,d,253,268 238,241,278,278,d,274,294
278,282,299,299,b,275,296 276,278,281,290,u,268,285 276,279,280,286,d,271,287 262,263,280,285,u,252,266
256,258,264,267,d,256,268 245,248,266,269,u,237,251 245,247,251,266,d,244,259 242,253,255,264,d,249,263
243,254,266,268,d,262,279 243,243,265,265,u,230,247 239,241,250,250,d,241,256 229,233,249,253,u,220,236
228,229,243,246,d,237,252 235,236,242,245,u,229,241 230,236,248,250,d,245,258 246,248,251,255,u,244,255
224,224,243,244,u,211,223 207,210,225,230,u,195,209 193,195,208,209,u,182,196 193,193,204,207,d,198,212
199,200,203,210,w,199,211 227,233,250,252,d,260,272 249,249,260,268,d,263,276 260,260,278,281,d,278,292
273,275,288,292,d,284,300 270,274,290,291,u,264,279 262,268,279,282,d,270,285 262,266,280,285,u,254,270
257,258,268,274,u,247,263 249,252,266,270,d,259,274 263,270,281,291,d,279,296 273,277,281,286,u,271,285
256,270,278,278,u,259,274 268,272,293,297,d,290,307 292,294,302,303,b,290,304 286,291,302,309,d,295,312
285,294,297,298,u,283,299 279,281,296,297,u,270,284 273,273,283,288,u,262,276 247,247,273,273,u,231,245
238,250,258,263,d,251,267 257,259,260,276,d,256,272 254,259,272,277,d,268,285 252,252,275,277,u,240,257
238,243,254,258,u,231,247 217,217,243,243,u,199,217 214,215,227,236,d,219,237 208,215,225,225,u,204,220
214,218,220,224,d,212,226 215,218,223,230,d,218,231 218,219,232,232,d,229,240 224,231,233,237,w,227,238
222,230,232,245,w,225,237 226,228,233,239,d,228,240 231,233,234,237,d,229,240 230,236,238,239,d,234,244
240,244,246,251,d,246,254 245,245,253,253,d,253,259`.split(/\s+/).map(row => row.split(','));

// oscillator lines, x,y pairs from the left axis
const lines = [
  ['#000', 2, '0,35 27,33 37,37 61,37 81,32 104,27 131,26 164,22 181,24 197,25 231,31 264,28 307,35 341,35 361,31 374,27 442,25 454,27 497,28 521,32 547,35 566,31 601,39 614,39 627,35 641,35 664,39 674,39 694,35 717,31 744,32 774,29 804,33 831,27 844,27 867,33 894,33 921,31 941,35 957,35 974,37 991,37 1014,31 1037,33 1067,27 1091,27 1114,31 1137,33 1157,38 1171,41'],
  ['#f00', 2, '0,26 12,28 27,32 111,34 117,27 157,26 247,27 257,29 364,29 397,29 414,27 609,27 617,35 711,35 721,33 754,32 767,30 871,31 941,31 951,33 987,33 994,35 1031,35 1044,33 1171,33'],
  ['#009600', 2, '17,29 27,32 51,33 54,35 189,35 197,24 207,24 217,26 302,27 311,33 444,33 451,26 539,26 547,33 784,33 794,31 854,30 951,29 957,33 971,35 1094,35 1101,31 1134,31 1141,33 1171,33'],
  ['#fff', 2, '0,30 12,30 22,23 38,28 49,23 59,23 101,8 147,8 162,3 177,8 188,9 197,15 207,15 231,23 239,20 242,18 259,15 284,23 319,23 326,18 337,20 364,11 371,9 387,10 407,8 426,11 442,5 454,13 467,15 487,11 517,23 547,21 566,16 601,27 609,27 621,18 636,13 659,23 671,23 694,12 714,11 731,12 747,15 767,10 787,12 802,18 814,12 829,7 844,10 867,18 901,18 917,11 927,16 942,22 952,18 961,21 967,18 977,22 987,21 1011,12 1027,12 1037,16 1064,8 1091,10 1107,18 1117,20 1137,19 1157,27 1171,29'],
  ['#f00', 1, '0,18 5,18 12,31 39,31 51,27 61,24 110,24 118,9 197,9 207,15 232,15 242,23 311,23 364,21 399,21 407,11 461,11 469,15 522,16 531,22 601,23 609,28 662,28 669,23 706,23 715,13 737,13 751,15 771,12 802,13 811,18 934,19 951,23 967,21 977,22 1039,22 1049,16 1119,16 1126,20 1171,20'],
  ['#009600', 1, '0,23 101,23 109,8 164,7 171,4 207,4 214,14 302,14 311,21 326,21 331,19 374,18 381,9 442,7 449,6 487,6 496,11 539,11 547,21 567,21 574,16 642,13 697,13 714,11 761,11 794,10 831,8 837,8 917,8 924,11 952,11 961,18 977,20 1014,20 1022,11 1066,11 1072,8 1136,8 1144,19 1171,20']
];

const months = [
  [1, 'Jul'], [5, 'Aug'], [9, 'Sep'], [14, 'Oct'], [18, 'Nov'], [22, 'Dec'], [27, '2018'], [31, 'Feb'], [35, 'Mar'],
  [40, 'Apr'], [44, 'May'], [48, 'Jun'], [53, 'Jul'], [57, 'Aug'], [62, 'Sep'], [66, 'Oct'], [70, 'Nov'], [75, 'Dec'],
  [79, '2019'], [83, 'Feb'], [87, 'Mar'], [92, 'Apr'], [96, 'May'], [101, 'Jun'], [105, 'Jul'], [109, 'Aug'],
  [114, 'Sep'], [118, 'Oct'], [122, 'Nov'], [127, 'Dec'], [131, '2020'], [136, 'Feb']
];

const LEFT = 50;
let W, right, k;

const edge = i => Math.floor(LEFT + 0.63 + 8.7655 * k * i);
const mid = i => Math.floor(LEFT + 5.53 + 8.7655 * k * i);
const rect = (x, y, w, h, fill) => `<rect x="${x}" y="${y}" width="${w}" height="${h}" fill="${fill}"/>`;

function kindAt(i) {
  let kind = 0;
  zones.forEach(z => { if (z[0] <= i) kind = z[1]; });
  return kind;
}

function zoneLines(h) {
  return zones.slice(1).map(z => rect(edge(z[0]), 0, 1, h, zoneColor[z[1]])).join('');
}

function axes(h, major, minor, leftColor) {
  let s = rect(LEFT, 0, 1, h, leftColor) + rect(right, 0, 1, h, '#fff');
  major.forEach(y => { s += rect(LEFT - 7, y, 7, 1, leftColor) + rect(right, y, 8, 1, '#fff'); });
  minor.forEach(y => { s += rect(LEFT - 3, y, 3, 1, leftColor) + rect(right, y, 3, 1, '#fff'); });
  return s;
}

function scaleText(y, text, leftColor) {
  return `<text class="scale" x="${LEFT - 11}" y="${y}" fill="${leftColor}">${text}</text>` +
    `<text class="scale" x="${right + 47}" y="${y}" fill="#fff">${text}</text>`;
}

function drawSign() {
  const bar = (x, y, h, c) => `<rect class="round" x="${x}" y="${y}" width="5" height="${h}" rx="2" fill="${c}"/>`;
  let s = rect(LEFT, 20, right - LEFT, 1, '#fff') + zoneLines(40);
  for (let i = 0; i < BARS; i++) {
    const x = mid(i) - 2, kind = kindAt(i);
    if (kind > 0) s += bar(x, 1, 20, '#009600');
    if (kind < 0) s += bar(x, 18, 21, '#f00');
    else s += bar(x, 18, 5, '#f00');
  }
  return s + axes(40, [3, 20, 36], [11, 28], '#000') + scaleText(25, '0', '#000');
}

function drawTuga() {
  let s = rect(LEFT, 18, right - LEFT, 1, '#00f') + zoneLines(45);
  lines.forEach(([color, width, pts]) => {
    const p = pts.split(' ').map(pt => {
      const [x, y] = pt.split(',').map(Number);
      return (LEFT + 1 + x * k) + ',' + (y + (width === 1 ? 0.5 : 0));
    }).join(' ');
    s += `<polyline points="${p}" fill="none" stroke="${color}" stroke-width="${width}"/>`;
  });
  return s + axes(45, [18], [8, 27, 37], '#000') + scaleText(23, '0', '#000');
}

function drawTrend() {
  let s = zoneLines(36);
  trend.forEach((v, i) => {
    const x = mid(i);
    if (v > 0) {
      s += rect(x - 1, 20 - v, 3, v - 2, '#fff') + rect(x, 19 - v, 1, v, '#fff');
      s += rect(x - 1, 18, 3, 1, '#000') + rect(x, 17, 1, 3, '#000');
    } else {
      s += rect(x - 1, 18, 3, Math.max(1, -v - 2), '#000') + rect(x, 17, 1, -v, '#000');
    }
  });
  return s + axes(36, [2, 18, 33], [10, 25], '#000') + scaleText(24, '0', '#000');
}

function drawPrice(h) {
  const q = h / 308;
  const py = v => Math.round((v - 11) * q);
  const level = p => Math.round((26.4 + (100 - p) * 6.13) * q);
  const dot = (x, y, c) => rect(x - 1, y, 4, 1, c) + rect(x, y - 1, 2, 3, c);
  let s = zoneLines(h);
  candles.forEach(([hi, t, b, lo, kind, red, green], i) => {
    const x = mid(i), top = py(t), bot = py(b);
    const c = kind === 'd' || kind === 'b' ? '#7b9dc6' : '#c8c8c8';
    s += rect(x, py(hi), 1, py(lo) - py(hi), c);
    s += rect(x - 3, top, 7, bot - top, c);
    if (kind === 'u' || kind === 'b') s += rect(x - 2, top + 1, 5, bot - top - 2, '#282828');
    s += dot(x, py(green), '#005a00') + dot(x, py(red), '#f00');
  });
  const major = [], minor = [];
  for (let p = 104; p >= 55; p--) (p % 5 ? minor : major).push(level(p));
  s += axes(h, major, minor, '#fff');
  for (let p = 100; p >= 55; p -= 5) if (p !== 65) s += scaleText(level(p) + 5, p, '#fff');
  [2, right + 4].forEach(x => {
    s += rect(x, level(65) - 9, 43, 18, '#fff') + rect(x + 1, level(65) - 8, 41, 16, '#000');
    s += `<text class="last" x="${x + 21}" y="${level(65) + 4}">64.7600</text>`;
  });
  return s;
}

function drawRibbon() {
  let s = `<defs>
    <pattern id="bear" x="1" width="8" height="8" patternUnits="userSpaceOnUse"><path d="M0 0l8 8" stroke="#f00"/></pattern>
    <pattern id="bull" x="1" width="8" height="8" patternUnits="userSpaceOnUse"><path d="M8 0l-8 8" stroke="#009600"/></pattern>
  </defs>`;
  zones.forEach(([start, kind], n) => {
    const end = n + 1 < zones.length ? zones[n + 1][0] : BARS + 0.5;
    const x = edge(start), w = edge(end) - x;
    if (kind) s += rect(x, 0, w, 21, kind < 0 ? 'url(#bear)' : 'url(#bull)');
    else s += rect(x + 1, 5, w - 1, 1, '#ff0') + rect(x + 1, 13, w - 1, 1, '#ff0');
    const name = { '-1': 'Bearish', '0': 'Neutral', '1': 'Bullish' }[kind];
    if (end - start > 5) s += `<text class="zone" x="${x + w / 2}" y="16">${name}</text>`;
  });
  return s;
}

function drawDates() {
  let s = rect(LEFT, 0, right - LEFT, 1, '#fff') + rect(LEFT, 20, right - LEFT, 1, '#888') + rect(LEFT, 0, 1, 20, '#888');
  for (let i = 0; mid(i) < right; i++) s += rect(mid(i), 1, 1, 4, '#fff');
  months.forEach(([i, name]) => {
    s += rect(mid(i), 1, 1, 19, '#fff') + `<text x="${mid(i) + 2}" y="17" fill="#fff">${name}</text>`;
  });
  return s;
}

function draw() {
  const byId = id => document.getElementById(id);
  W = byId('sign').getBoundingClientRect().width;
  right = W - 51;
  k = (right - LEFT) / 1228;
  byId('sign').innerHTML = drawSign();
  byId('tuga').innerHTML = drawTuga();
  byId('trend').innerHTML = drawTrend();
  byId('price').innerHTML = drawPrice(byId('price').getBoundingClientRect().height);
  byId('ribbon').innerHTML = drawRibbon();
  byId('dates').innerHTML = drawDates();
}

const colors = [
  '#ff0000', '#d653d6', '#ffb9c8', '#ffffff', '#009600', '#005a00', '#000000', '#ff8c00',
  '#e06414', '#7f7fc4', '#ffe4e1', '#00006a', '#000096', '#ffd700', '#004646', '#8b0000'
];
document.getElementById('swatches').innerHTML = colors
  .map(c => `<button class="swatch" style="background:${c}" aria-label="${c}"></button>`).join('');

document.getElementById('templates').innerHTML = [1, 2, 3, 4, 5, 6]
  .map(n => `<button aria-label="Template ${n}"><svg width="16" height="14"><rect x=".5" y=".5" width="15" height="13" fill="#fff" stroke="#5d8299"/><path d="M1 1.500h14" stroke="#9cc3d8" stroke-width="2"/><path d="M2 10l3-3 3 3" fill="none" stroke="#a00"/><text x="8" y="12">${n}</text></svg></button>`).join('');

draw();
window.addEventListener('resize', draw);
```
